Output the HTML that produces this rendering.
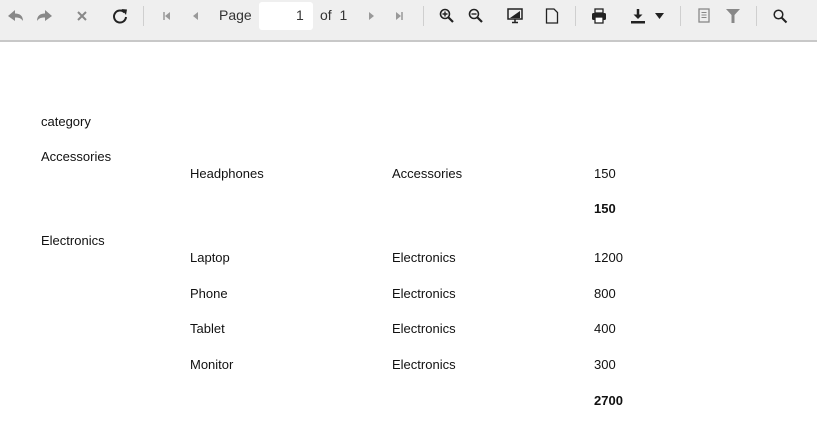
<!DOCTYPE html>
<html><head><style>
body{margin:0;width:817px;height:442px;background:#fff;font-family:"Liberation Sans",sans-serif;position:relative;overflow:hidden}
.tb{position:absolute;left:0;top:0;width:817px;height:40px;background:#efefef;border-bottom:2px solid #c8c8c8}
.sep{position:absolute;top:6px;width:1px;height:20px;background:#cfcfcf}
svg{position:absolute}
.t{position:absolute;font-size:13px;line-height:16px;color:#111;white-space:nowrap}
.b{font-weight:bold}
</style></head><body>
<div class="tb">
<svg style="left:7px;top:8px" width="18" height="16" viewBox="0 0 18 16"><path d="M1 8 L8 2 V5.5 C13 5.5 16 8 16 13 C14 10 12 9.5 8 9.5 V13 Z" fill="#888"/></svg>
<svg style="left:35px;top:8px" width="18" height="16" viewBox="0 0 18 16"><path d="M17 8 L10 2 V5.5 C5 5.5 2 8 2 13 C4 10 6 9.5 10 9.5 V13 Z" fill="#888"/></svg>
<svg style="left:76px;top:10px" width="12" height="12" viewBox="0 0 12 12"><path d="M2 2 L10 10 M10 2 L2 10" stroke="#888" stroke-width="2"/></svg>
<svg style="left:111px;top:7px" width="18" height="18" viewBox="0 0 18 18"><path d="M13.5 5.5 A6 6 0 1 0 15 10" fill="none" stroke="#222" stroke-width="2"/><path d="M10.5 2 L16 2.5 L15 8 Z" fill="#222"/></svg>
<div class="sep" style="left:143px"></div>
<svg style="left:163px;top:12px" width="8" height="8" viewBox="0 0 8 8"><path d="M1 0V8" stroke="#999" stroke-width="1.5"/><path d="M7 0V8L2 4Z" fill="#999"/></svg>
<svg style="left:193px;top:12px" width="6" height="8" viewBox="0 0 6 8"><path d="M5 0V8L0 4Z" fill="#999"/></svg>
<div class="t" style="left:219px;top:7px;font-size:14px;color:#333">Page</div>
<div style="position:absolute;left:259px;top:2px;width:54px;height:28px;background:#fff;border-radius:3px"></div>
<div class="t" style="left:296px;top:7px;font-size:14px;color:#333">1</div>
<div class="t" style="left:320px;top:7px;font-size:14px;color:#333">of&nbsp; 1</div>
<svg style="left:368px;top:12px" width="6" height="8" viewBox="0 0 6 8"><path d="M1 0V8L6 4Z" fill="#999"/></svg>
<svg style="left:395px;top:12px" width="8" height="8" viewBox="0 0 8 8"><path d="M1 0V8L6 4Z" fill="#999"/><path d="M7 0V8" stroke="#999" stroke-width="1.5"/></svg>
<div class="sep" style="left:423px"></div>
<svg style="left:439px;top:8px" width="16" height="16" viewBox="0 0 16 16"><circle cx="6" cy="6" r="4.5" fill="none" stroke="#222" stroke-width="1.6"/><path d="M9.5 9.5L14 14" stroke="#222" stroke-width="2.2"/><path d="M3.5 6H8.5M6 3.5V8.5" stroke="#222" stroke-width="1.4"/></svg>
<svg style="left:468px;top:8px" width="16" height="16" viewBox="0 0 16 16"><circle cx="6" cy="6" r="4.5" fill="none" stroke="#222" stroke-width="1.6"/><path d="M9.5 9.5L14 14" stroke="#222" stroke-width="2.2"/><path d="M3.5 6H8.5" stroke="#222" stroke-width="1.4"/></svg>
<svg style="left:507px;top:8px" width="16" height="16" viewBox="0 0 16 16"><rect x="1" y="1" width="14" height="10" fill="none" stroke="#222" stroke-width="1.5"/><path d="M3 10L13 3V10Z" fill="#222"/><path d="M8 11V14M5 14.5H11" stroke="#222" stroke-width="1.5"/></svg>
<svg style="left:545px;top:8px" width="14" height="16" viewBox="0 0 14 16"><path d="M1.5 1H9L12.5 4.5V15H1.5Z" fill="none" stroke="#222" stroke-width="1.3"/></svg>
<div class="sep" style="left:575px"></div>
<svg style="left:591px;top:8px" width="16" height="16" viewBox="0 0 16 16"><rect x="4" y="1" width="8" height="4" fill="none" stroke="#222" stroke-width="1.3"/><rect x="1" y="5" width="14" height="7" rx="1.5" fill="#222"/><rect x="4" y="9" width="8" height="6" fill="#fff" stroke="#222" stroke-width="1.3"/></svg>
<svg style="left:630px;top:8px" width="16" height="16" viewBox="0 0 16 16"><path d="M8 1V9" stroke="#222" stroke-width="2.5"/><path d="M3.5 6.5L8 11L12.5 6.5Z" fill="#222"/><rect x="1" y="13" width="14" height="2.5" fill="#222"/></svg>
<svg style="left:655px;top:13px" width="9" height="6" viewBox="0 0 9 6"><path d="M0 0H9L4.5 6Z" fill="#222"/></svg>
<div class="sep" style="left:680px"></div>
<svg style="left:698px;top:8px" width="13" height="16" viewBox="0 0 13 16"><rect x="1" y="1" width="10" height="13" fill="none" stroke="#888" stroke-width="1.3"/><path d="M3.5 4.5H8.5M3.5 7H8.5M3.5 9.5H8.5" stroke="#888" stroke-width="1"/></svg>
<svg style="left:726px;top:9px" width="14" height="14" viewBox="0 0 14 14"><path d="M0 0H14L8.5 6V14H5.5V6Z" fill="#888"/></svg>
<div class="sep" style="left:756px"></div>
<svg style="left:773px;top:9px" width="15" height="15" viewBox="0 0 15 15"><circle cx="5.5" cy="5.5" r="4.3" fill="none" stroke="#222" stroke-width="1.5"/><path d="M8.5 8.5L13.5 13.5" stroke="#222" stroke-width="2"/></svg>
</div>
<div class="t" style="left:41px;top:114px">category</div>
<div class="t" style="left:41px;top:149px">Accessories</div>
<div class="t" style="left:190px;top:166px">Headphones</div>
<div class="t" style="left:392px;top:166px">Accessories</div>
<div class="t" style="left:594px;top:166px">150</div>
<div class="t b" style="left:594px;top:201px">150</div>
<div class="t" style="left:41px;top:233px">Electronics</div>
<div class="t" style="left:190px;top:250px">Laptop</div>
<div class="t" style="left:392px;top:250px">Electronics</div>
<div class="t" style="left:594px;top:250px">1200</div>
<div class="t" style="left:190px;top:286px">Phone</div>
<div class="t" style="left:392px;top:286px">Electronics</div>
<div class="t" style="left:594px;top:286px">800</div>
<div class="t" style="left:190px;top:321px">Tablet</div>
<div class="t" style="left:392px;top:321px">Electronics</div>
<div class="t" style="left:594px;top:321px">400</div>
<div class="t" style="left:190px;top:357px">Monitor</div>
<div class="t" style="left:392px;top:357px">Electronics</div>
<div class="t" style="left:594px;top:357px">300</div>
<div class="t b" style="left:594px;top:393px">2700</div>
</body></html>
